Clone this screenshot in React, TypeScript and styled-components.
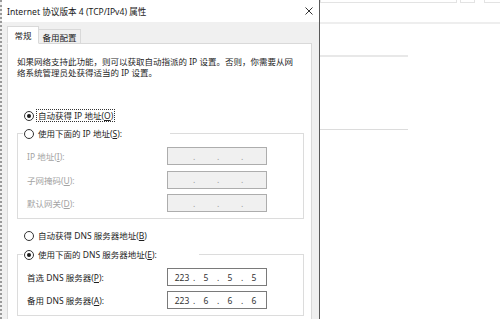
import styled, { createGlobalStyle } from "styled-components";

const GlobalStyle = createGlobalStyle`
  html, body {
    margin: 0;
    padding: 0;
    background: #ffffff;
  }
  body {
    font-family: "Noto Sans", "Noto Sans CJK SC", sans-serif;
    font-size: 8.5px;
    color: #1e1e1e;
  }
`;

const Screen = styled.div`
  width: 500px;
  height: 319px;
  overflow: hidden;
  display: flex;
  background: #ffffff;
`;

const Dialog = styled.div`
  width: 317px;
  height: 319px;
  flex-shrink: 0;
  border-left: 2px dotted #9a9a9a;
  border-right: 1px solid #5a5a5a;
  display: flex;
  flex-direction: column;
  background: #f0f0f0;
`;

const TitleBar = styled.div`
  height: 22px;
  background: #ffffff;
  display: flex;
  align-items: center;
  justify-content: space-between;
  padding: 0 6px 0 5px;
  font-size: 8.6px;
  color: #1a1a1a;
`;

const CloseIcon = () => (
  <svg width="8" height="8" viewBox="0 0 8 8">
    <path d="M0.5 0.5 L7.5 7.5 M7.5 0.5 L0.5 7.5" stroke="#333" strokeWidth="1" fill="none" />
  </svg>
);

const Body = styled.div`
  flex: 1;
  display: flex;
  flex-direction: column;
  padding: 0 7px 0 5px;
`;

const TabStrip = styled.div`
  height: 22px;
  display: flex;
  align-items: flex-end;
  margin-bottom: -1px;
  position: relative;
  z-index: 1;
`;

const Tab = styled.div<{ $active?: boolean }>`
  box-sizing: border-box;
  height: ${(p) => (p.$active ? "18px" : "15px")};
  display: flex;
  align-items: center;
  justify-content: center;
  width: ${(p) => (p.$active ? "32px" : "42px")};
  background: ${(p) => (p.$active ? "#ffffff" : "#f0f0f0")};
  border: 1px solid #d9d9d9;
  border-bottom: ${(p) => (p.$active ? "1px solid #ffffff" : "1px solid #d9d9d9")};
  border-left: ${(p) => (p.$active ? "1px solid #d9d9d9" : "none")};
  color: #1a1a1a;
`;

const Panel = styled.div`
  flex: 1;
  background: #ffffff;
  border: 1px solid #d9d9d9;
  border-bottom: none;
  padding: 12px 0 0 0;
  display: flex;
  flex-direction: column;
`;

const Description = styled.p`
  margin: 0 0 0 9px;
  line-height: 11px;
  color: #1e1e1e;
  white-space: nowrap;
`;

const RadioRow = styled.label<{ $mt: number }>`
  display: flex;
  align-items: center;
  gap: 2px;
  height: 13px;
  margin: ${(p) => p.$mt}px 0 0 16px;
  color: #1e1e1e;
`;

const RadioCircle = styled.span<{ $checked?: boolean }>`
  box-sizing: border-box;
  width: 10px;
  height: 10px;
  border-radius: 50%;
  border: 1px solid #333333;
  background: #ffffff;
  display: flex;
  align-items: center;
  justify-content: center;
  flex-shrink: 0;
  &::after {
    content: "";
    width: 4px;
    height: 4px;
    border-radius: 50%;
    background: ${(p) => (p.$checked ? "#1a1a1a" : "transparent")};
  }
`;

const RadioText = styled.span<{ $focus?: boolean }>`
  padding: 0 1px;
  line-height: 11px;
  border: 1px dotted ${(p) => (p.$focus ? "#333333" : "transparent")};
  white-space: nowrap;
`;

const Group = styled.fieldset<{ $mt: number }>`
  margin: ${(p) => p.$mt}px 7px 0 9px;
  padding: 7px 9px 6px 9px;
  border: 1px solid #dcdcdc;
  min-width: 0;
`;

const Legend = styled.legend<{ $tail: number }>`
  margin-left: -4px;
  padding: 0 ${(p) => p.$tail}px 0 1px;
  height: 13px;
  display: flex;
  align-items: center;
  gap: 2px;
  white-space: nowrap;
  background: #ffffff;
`;

const FieldGrid = styled.div<{ $gap: number }>`
  display: grid;
  grid-template-columns: 140px 100px;
  row-gap: ${(p) => p.$gap}px;
  align-items: center;
`;

const FieldLabel = styled.span<{ $disabled?: boolean }>`
  color: ${(p) => (p.$disabled ? "#a3a3a3" : "#1e1e1e")};
  white-space: nowrap;
`;

const IpBox = styled.div<{ $disabled?: boolean }>`
  box-sizing: border-box;
  height: 18px;
  width: 100px;
  display: flex;
  align-items: center;
  padding-left: 3px;
  background: ${(p) => (p.$disabled ? "#f0f0f0" : "#ffffff")};
  border: 1px solid ${(p) => (p.$disabled ? "#adadad" : "#7a7a7a")};
  color: #333333;
  font-size: 8.5px;
`;

const Octet = styled.span`
  width: 22px;
  text-align: center;
`;

const Dot = styled.span<{ $disabled?: boolean }>`
  width: 2px;
  text-align: center;
  color: ${(p) => (p.$disabled ? "#9a9a9a" : "#333333")};
`;

const Backdrop = styled.div`
  flex: 1;
  display: flex;
  flex-direction: column;
`;

const TopBoxes = styled.div`
  display: flex;
  height: 3px;
`;

const TopBox = styled.div<{ $w: number; $ml: number }>`
  width: ${(p) => p.$w}px;
  margin-left: ${(p) => p.$ml}px;
  border: 1px solid #e3e3e3;
  border-top: none;
`;

const Rule = styled.div<{ $w: number; $mt: number; $h: number; $c: string }>`
  width: ${(p) => p.$w}px;
  margin-top: ${(p) => p.$mt}px;
  height: ${(p) => p.$h}px;
  background: ${(p) => p.$c};
`;

const IpField = ({ values, disabled }: { values?: string[]; disabled?: boolean }) => {
  const v = values || ["", "", "", ""];
  return (
    <IpBox $disabled={disabled}>
      <Octet>{v[0]}</Octet>
      <Dot $disabled={disabled}>.</Dot>
      <Octet>{v[1]}</Octet>
      <Dot $disabled={disabled}>.</Dot>
      <Octet>{v[2]}</Octet>
      <Dot $disabled={disabled}>.</Dot>
      <Octet>{v[3]}</Octet>
    </IpBox>
  );
};

export default function App() {
  return (
    <Screen>
      <GlobalStyle />
      <Dialog>
        <TitleBar>
          <span>Internet 协议版本 4 (TCP/IPv4) 属性</span>
          <CloseIcon />
        </TitleBar>
        <Body>
          <TabStrip>
            <Tab $active>常规</Tab>
            <Tab>备用配置</Tab>
          </TabStrip>
          <Panel>
            <Description>
              如果网络支持此功能，则可以获取自动指派的 IP 设置。否则，你需要从网
              <br />
              络系统管理员处获得适当的 IP 设置。
            </Description>

            <RadioRow $mt={31}>
              <RadioCircle $checked />
              <RadioText $focus>
                自动获得 IP 地址(<u>O</u>)
              </RadioText>
            </RadioRow>

            <Group $mt={5}>
              <Legend $tail={46}>
                <RadioCircle />
                <RadioText>
                  使用下面的 IP 地址(<u>S</u>):
                </RadioText>
              </Legend>
              <FieldGrid $gap={5.5}>
                <FieldLabel $disabled>
                  IP 地址(<u>I</u>):
                </FieldLabel>
                <IpField disabled />
                <FieldLabel $disabled>
                  子网掩码(<u>U</u>):
                </FieldLabel>
                <IpField disabled />
                <FieldLabel $disabled>
                  默认网关(<u>D</u>):
                </FieldLabel>
                <IpField disabled />
              </FieldGrid>
            </Group>

            <RadioRow $mt={10}>
              <RadioCircle />
              <RadioText>
                自动获得 DNS 服务器地址(<u>B</u>)
              </RadioText>
            </RadioRow>

            <Group $mt={6}>
              <Legend $tail={40}>
                <RadioCircle $checked />
                <RadioText>
                  使用下面的 DNS 服务器地址(<u>E</u>):
                </RadioText>
              </Legend>
              <FieldGrid $gap={5}>
                <FieldLabel>
                  首选 DNS 服务器(<u>P</u>):
                </FieldLabel>
                <IpField values={["223", "5", "5", "5"]} />
                <FieldLabel>
                  备用 DNS 服务器(<u>A</u>):
                </FieldLabel>
                <IpField values={["223", "6", "6", "6"]} />
              </FieldGrid>
            </Group>
          </Panel>
        </Body>
      </Dialog>
      <Backdrop>
        <TopBoxes>
          <TopBox $w={135} $ml={0} />
          <TopBox $w={13} $ml={3} />
          <TopBox $w={20} $ml={9} />
        </TopBoxes>
        <Rule $w={180} $mt={19} $h={2} $c="#eeeeee" />
        <Rule $w={88} $mt={31} $h={2} $c="#e8e8e8" />
        <Rule $w={88} $mt={72} $h={1} $c="#dcdcdc" />
      </Backdrop>
    </Screen>
  );
}
